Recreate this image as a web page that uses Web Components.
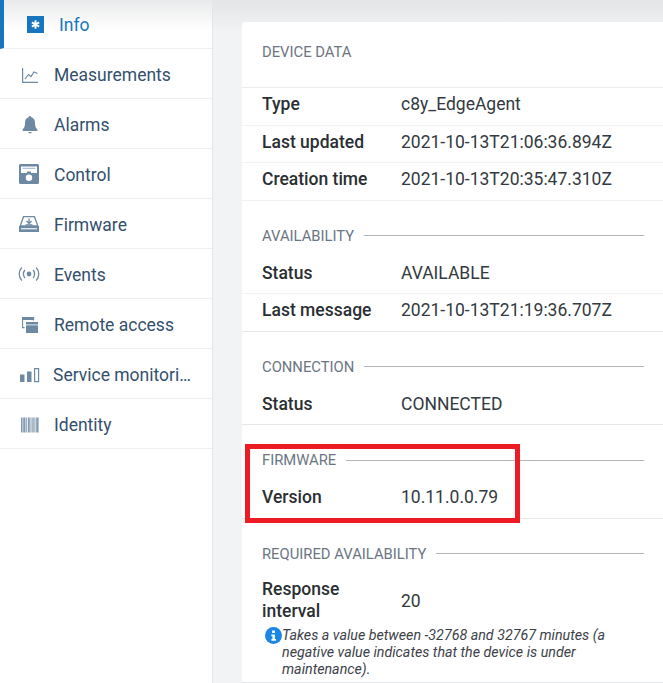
<!DOCTYPE html>
<html>
<head>
<meta charset="utf-8">
<style>
  html, body { margin: 0; height: 100%; overflow: hidden; }
  body { font-family: Roboto, "Liberation Sans", sans-serif; background: #f2f3f4; }
  #app { display: flex; height: 683px; width: 663px; overflow: hidden; }
</style>
</head>
<body>
<div id="app">
  <side-nav>
    <nav-item label="Info" icon="info" active></nav-item>
    <nav-item label="Measurements" icon="chart"></nav-item>
    <nav-item label="Alarms" icon="bell"></nav-item>
    <nav-item label="Control" icon="control"></nav-item>
    <nav-item label="Firmware" icon="firmware"></nav-item>
    <nav-item label="Events" icon="events"></nav-item>
    <nav-item label="Remote access" icon="remote"></nav-item>
    <nav-item label="Service monitoring" icon="service" tight></nav-item>
    <nav-item label="Identity" icon="identity"></nav-item>
  </side-nav>
  <main-pane>
    <data-card>
      <card-section title="Device data" first>
        <data-row name="Type" value="c8y_EdgeAgent"></data-row>
        <data-row name="Last updated" value="2021-10-13T21:06:36.894Z"></data-row>
        <data-row name="Creation time" value="2021-10-13T20:35:47.310Z"></data-row>
      </card-section>
      <card-section title="Availability">
        <data-row name="Status" value="AVAILABLE"></data-row>
        <data-row name="Last message" value="2021-10-13T21:19:36.707Z" last></data-row>
      </card-section>
      <card-section title="Connection">
        <data-row name="Status" value="CONNECTED" last></data-row>
      </card-section>
      <card-section title="Firmware">
        <data-row name="Version" value="10.11.0.0.79" last></data-row>
      </card-section>
      <card-section title="Required availability">
        <data-row name="Response interval" value="20" wrap></data-row>
        <help-note>Takes a value between -32768 and 32767 minutes (a negative value indicates that the device is under maintenance).</help-note>
      </card-section>
      <red-box></red-box>
    </data-card>
  </main-pane>
</div>

<script>
// Icons are drawn on a 20 x 20 box, in the current colour
const ICONS = {
  info: '<rect width="20" height="20" fill="#1776bf"/><path d="M10 5v10M5.700 7.500l8.600 5M14.300 7.500l-8.600 5" stroke="#fff" stroke-width="2.200" fill="none"/>',
  chart: '<path d="M3.600 4v14.400H19" fill="none" stroke="currentColor" stroke-width="1.200"/><path d="M6 15l3.500-4.500 2.500 2 3-4.500 3.500 1.500" fill="none" stroke="currentColor" stroke-width="1.200"/>',
  bell: '<path fill="currentColor" d="M11 2c.9 0 1.300.6 1.300 1.300 2.700.7 3.700 3 3.700 5.700 0 3.300.8 5 2.400 6.500V17H3.600v-1.500C5.200 14 6 12.300 6 9c0-2.700 1-5 3.700-5.700C9.700 2.600 10.100 2 11 2zM9.200 18h3.600c-.2.800-.9 1.400-1.800 1.400S9.400 18.800 9.200 18z"/>',
  control: '<path fill="currentColor" fill-rule="evenodd" d="M1.500 0h17c.8 0 1.500.7 1.500 1.500v17c0 .8-.7 1.500-1.500 1.500h-17C.7 20 0 19.300 0 18.500v-17C0 .7.700 0 1.500 0zM2 2.500V9h6V7.500h4V9h6V2.500H2zM10 10.500a3.200 3.200 0 1 0 0 6.400 3.200 3.200 0 0 0 0-6.400z"/><path fill="currentColor" d="M3.500 3.800h13v1h-13z" opacity=".65"/>',
  firmware: '<path fill="none" stroke="currentColor" stroke-width="1.300" d="M4.500 2.700h11L18.800 12H1.200z"/><path fill="currentColor" d="M0 12h20v6H0z"/><path fill="#fff" d="M2 14.200h16v1.100H2z"/><path fill="none" stroke="currentColor" stroke-width="1.300" d="M10 4.500v5M7.500 7l2.500 2.500L12.500 7M6.500 10.800h7"/>',
  events: '<circle cx="10" cy="10" r="2.400" fill="currentColor"/><path fill="none" stroke="currentColor" stroke-width="1.300" d="M6 6a5.800 5.800 0 0 0 0 8M14 6a5.800 5.800 0 0 1 0 8M2.800 3.500a9.500 9.500 0 0 0 0 13M17.200 3.500a9.500 9.500 0 0 1 0 13"/>',
  remote: '<path fill="none" stroke="currentColor" stroke-width="1.100" d="M3.600 3.600h11v10h-11z"/><path fill="currentColor" d="M3 3h12v3H3z"/><path fill="#fff" d="M5.500 6.500H20V20H5.500z"/><path fill="currentColor" d="M7 8h12v11H7z"/><path fill="#fff" d="M7 10.500h12v.8H7z"/>',
  service: '<path fill="currentColor" d="M1 10.500h4.500V18H1zM8 7.500h4.500V18H8z"/><path fill="none" stroke="currentColor" stroke-width="1.200" d="M15.600 4.600h4v13h-4z"/>',
  identity: '<path fill="currentColor" d="M2 3.500h1.600v15H2zM4.200 3.500h2.300v15H4.200zM7.200 3.500h1v15h-1zM9 3.500h1.800v15H9zM11.500 3.500h1v15h-1zM13.300 3.500h1.400v15h-1.400zM15.400 3.500h1v15h-1zM17.200 3.500h2.400v15h-2.400z" opacity=".85"/>'
};

class SideNav extends HTMLElement {
  constructor() {
    super();
    this.attachShadow({ mode: 'open' });
    this.shadowRoot.innerHTML = `
      <style>
        :host { display: block; flex: none; width: 212px; height: 100%; background: #fff; border-right: 1px solid #e3e5e7; }
      </style>
      <slot></slot>`;
  }
}

class NavItem extends HTMLElement {
  constructor() {
    super();
    this.attachShadow({ mode: 'open' });
  }
  connectedCallback() {
    this.shadowRoot.innerHTML = `
      <style>
        :host { display: flex; align-items: center; height: 49px; border-bottom: 1px solid #eeeff0; color: #34506e; font-size: 17.500px; }
        :host([active]) { height: 48px; color: #1776bf; border-left: 4px solid #1776bf; background: linear-gradient(#e9eaeb, #fff 30px); }
        .ic { flex: none; width: 20px; height: 20px; margin: 1px 0 0 19px; color: #6e8aa3; display: block; overflow: visible; }
        :host([active]) .ic { width: 17px; height: 17px; margin-left: 23px; }
        .tx { margin-left: 15px; padding-top: 2px; white-space: nowrap; overflow: hidden; text-overflow: ellipsis; width: 138px; }
        :host([tight]) .tx { margin-left: 14px; }
      </style>
      <svg class="ic" viewBox="0 0 20 20">${ICONS[this.getAttribute('icon')]}</svg>
      <span class="tx">${this.getAttribute('label')}</span>`;
  }
}

class MainPane extends HTMLElement {
  constructor() {
    super();
    this.attachShadow({ mode: 'open' });
    this.shadowRoot.innerHTML = `
      <style>
        :host { display: block; flex: 1; min-width: 0; padding: 22px 0 0 29px; background: linear-gradient(#e4e5e6, #f2f3f4 32px); overflow: hidden; }
      </style>
      <slot></slot>`;
  }
}

class DataCard extends HTMLElement {
  constructor() {
    super();
    this.attachShadow({ mode: 'open' });
    this.shadowRoot.innerHTML = `
      <style>
        :host { display: block; position: relative; background: #fff; border-radius: 3px 0 0 0; padding-bottom: 4px; }
      </style>
      <slot></slot>`;
  }
}

class CardSection extends HTMLElement {
  constructor() {
    super();
    this.attachShadow({ mode: 'open' });
  }
  connectedCallback() {
    this.shadowRoot.innerHTML = `
      <style>
        :host { display: block; }
        .hd { display: flex; align-items: center; gap: 10px; height: 56px; padding: 24px 19px 0 20px; box-sizing: border-box; color: #6b7682; font-size: 14.800px; line-height: 22px; text-transform: uppercase; white-space: nowrap; }
        .hd span { flex: 1; height: 1px; background: #b4b6bd; margin-bottom: 10px; }
        .hd b { font-weight: 400; margin-bottom: 9.500px; }
        :host([first]) .hd { height: 66px; padding-top: 0; border-bottom: 1px solid #eceded; }
        :host([first]) .hd b { margin-bottom: 6px; }
        :host([first]) .hd span { display: none; }
      </style>
      <div class="hd"><b>${this.getAttribute('title')}</b><span></span></div>
      <slot></slot>`;
  }
}

class DataRow extends HTMLElement {
  constructor() {
    super();
    this.attachShadow({ mode: 'open' });
  }
  connectedCallback() {
    this.shadowRoot.innerHTML = `
      <style>
        :host { display: flex; align-items: center; box-sizing: border-box; height: 37.500px; padding: 0 20px 4px; font-size: 17.500px; color: #333a40; border-bottom: 1px solid #f1f2f3; }
        :host([last]) { border-bottom-color: #e6e7e8; }
        :host([wrap]) { height: auto; padding: 3px 20px 5px; border-bottom: 0; }
        :host([wrap]) .v { padding-top: 2px; }
        .k { flex: none; width: 139px; padding-right: 16px; box-sizing: border-box; font-weight: 500; color: #2b2f33; line-height: 22px; }
        .v { flex: 1; min-width: 0; white-space: nowrap; }
      </style>
      <div class="k">${this.getAttribute('name')}</div>
      <div class="v">${this.getAttribute('value')}</div>`;
  }
}

class HelpNote extends HTMLElement {
  constructor() {
    super();
    this.attachShadow({ mode: 'open' });
    this.shadowRoot.innerHTML = `
      <style>
        :host { display: flex; padding: 0 40px 4px 23px; font-size: 14.250px; line-height: 17px; font-style: italic; color: #3d4249; border-bottom: 1px solid #e6e7e8; }
        svg { flex: none; width: 17px; height: 17px; }
        p { margin: 0; }
      </style>
      <svg viewBox="0 0 24 24"><circle cx="12" cy="12" r="12" fill="#1c86e6"/><path fill="#fff" d="M10 5h4v3.500h-4zM9 10.500h5V17h1.500v2.500h-6.500V17h1.500v-4H9z"/></svg>
      <p><slot></slot></p>`;
  }
}

// Cadre rouge par-dessus la fiche
class RedBox extends HTMLElement {
  constructor() {
    super();
    this.attachShadow({ mode: 'open' });
    this.shadowRoot.innerHTML = `
      <style>
        :host { display: block; position: absolute; left: 3px; top: 422px; width: 275px; height: 79px; border: 5px solid #ed1c24; box-sizing: border-box; }
      </style>`;
  }
}

customElements.define('side-nav', SideNav);
customElements.define('nav-item', NavItem);
customElements.define('main-pane', MainPane);
customElements.define('data-card', DataCard);
customElements.define('card-section', CardSection);
customElements.define('data-row', DataRow);
customElements.define('help-note', HelpNote);
customElements.define('red-box', RedBox);
</script>
</body>
</html>
